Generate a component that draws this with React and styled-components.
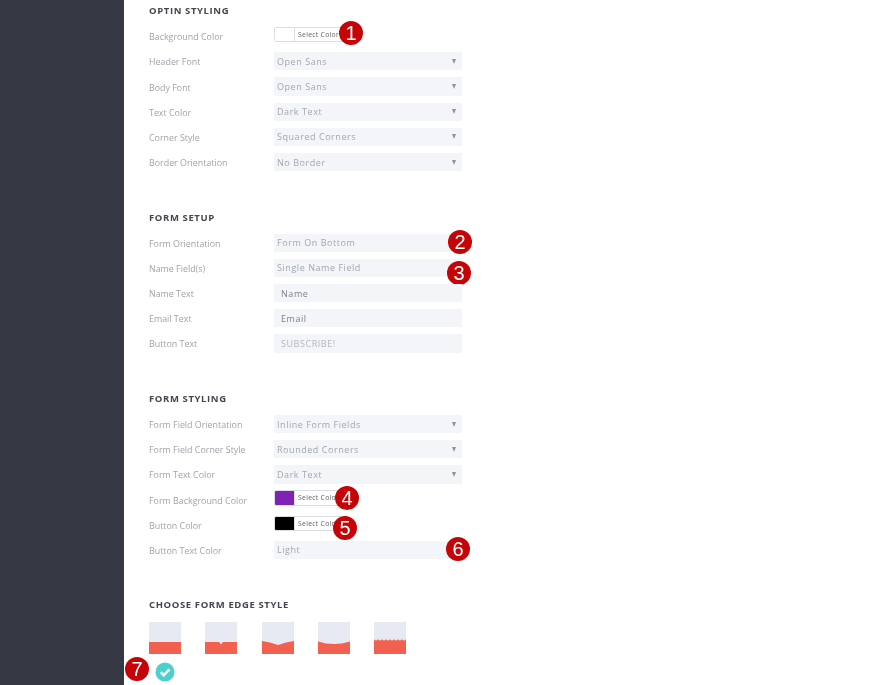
import React from "react";
import styled, { createGlobalStyle } from "styled-components";

const Global = createGlobalStyle`
  html, body { margin: 0; padding: 0; background: #fff; overflow: hidden; }
  body { font-family: "Open Sans", "Liberation Sans", sans-serif; }
`;
const Page = styled.div`
  display: flex;
  width: 880px;
  height: 685px;
  overflow: hidden;
`;
const Sidebar = styled.aside`
  flex: 0 0 124px;
  background: #363943;
`;
const Main = styled.main`
  position: relative;
  flex: 1;
  padding: 4px 0 0 25px;
  filter: blur(0.3px);
`;
const Section = styled.section`
  margin-bottom: 39.3px;
`;
const Heading = styled.h2`
  margin: 0 0 9px;
  height: 14px;
  font-size: 9.5px;
  line-height: 14px;
  font-weight: 700;
  letter-spacing: 0.62px;
  color: #43464f;
  text-transform: uppercase;
`;
const Rows = styled.div`
  display: grid;
  grid-auto-rows: 18.3px;
  row-gap: 6.9px;
`;
const Row = styled.div`
  position: relative;
  display: grid;
  grid-template-columns: 125px 188px;
  align-items: center;
  width: 313px;
`;
const Label = styled.label`
  padding-top: 1px;
  font-size: 8.9px;
  color: #a0a3aa;
  white-space: nowrap;
`;
const Field = styled.div`
  display: flex;
  align-items: center;
  justify-content: space-between;
  height: 18.3px;
  padding: 0 ${(p) => (p.$input ? "7px" : "3px")};
  padding-right: 6px;
  background: #f3f5f9;
  font-size: 9px;
  letter-spacing: 0.55px;
  color: ${(p) => p.$color || "#a3a6ae"};
  white-space: nowrap;
`;
const Arrow = styled.span`
  width: 0;
  height: 0;
  border-left: 2.5px solid transparent;
  border-right: 2.5px solid transparent;
  border-top: 5.5px solid #8f939d;
`;
const Picker = styled.div`
  display: flex;
  width: 72px;
  height: 15.5px;
  margin-top: -3px;
  box-sizing: border-box;
  border: 1px solid #dcdde0;
  border-radius: 2px;
  overflow: hidden;
  background: #fff;
`;
const Swatch = styled.span`
  flex: 0 0 19px;
  background: ${(p) => p.$color};
`;
const SelectText = styled.span`
  flex: 1;
  border-left: 1px solid #dcdde0;
  padding-left: 3px;
  font-size: 6.8px;
  line-height: 13px;
  letter-spacing: 0.3px;
  color: #5f626a;
  white-space: nowrap;
`;
const Badge = styled.span`
  position: absolute;
  left: ${(p) => p.$x}px;
  top: ${(p) => p.$y}px;
  width: 24px;
  height: 24px;
  border-radius: 50%;
  background: #c40407;
  color: #fff;
  font-family: "Liberation Sans", Arial, sans-serif;
  font-size: 20px;
  line-height: 24px;
  text-align: center;
`;
const Thumbs = styled.div`
  display: flex;
  gap: 24.3px;
  padding-top: 1px;
`;
const Thumb = styled.svg`
  display: block;
  width: 32px;
  height: 32px;
`;
const Check = styled.svg`
  position: absolute;
  left: 31px;
  top: 662px;
  width: 20px;
  height: 20px;
`;

const EDGES = [
  "M0 20H32V32H0Z",
  "M0 20H14L16 22.5L18 20H32V32H0Z",
  "M0 19Q8 20 16 23Q24 20 32 19V32H0Z",
  "M0 19.5Q16 24.5 32 19.5V32H0Z",
  "M0 16.5a2 2 0 0 0 4 0a2 2 0 0 0 4 0a2 2 0 0 0 4 0a2 2 0 0 0 4 0a2 2 0 0 0 4 0a2 2 0 0 0 4 0a2 2 0 0 0 4 0a2 2 0 0 0 4 0V32H0Z",
];

const Select = ({ label, value, children }) => (
  <Row>
    <Label>{label}</Label>
    <Field>{value}<Arrow /></Field>
    {children}
  </Row>
);
const Text = ({ label, value, input, color, children }) => (
  <Row>
    <Label>{label}</Label>
    <Field $input={input} $color={color}>{value}</Field>
    {children}
  </Row>
);
const Color = ({ label, color, children }) => (
  <Row>
    <Label>{label}</Label>
    <Picker>
      <Swatch $color={color} />
      <SelectText>Select Color</SelectText>
    </Picker>
    {children}
  </Row>
);

export default function App() {
  return (
    <Page>
      <Global />
      <Sidebar />
      <Main>
        <Section>
          <Heading>Optin Styling</Heading>
          <Rows>
            <Color label="Background Color" color="#ffffff"><Badge $x={190} $y={-6}>1</Badge></Color>
            <Select label="Header Font" value="Open Sans" />
            <Select label="Body Font" value="Open Sans" />
            <Select label="Text Color" value="Dark Text" />
            <Select label="Corner Style" value="Squared Corners" />
            <Select label="Border Orientation" value="No Border" />
          </Rows>
        </Section>
        <Section>
          <Heading>Form Setup</Heading>
          <Rows>
            <Text label="Form Orientation" value="Form On Bottom"><Badge $x={299} $y={-4}>2</Badge></Text>
            <Text label="Name Field(s)" value="Single Name Field"><Badge $x={298} $y={2}>3</Badge></Text>
            <Text label="Name Text" value="Name" input color="#7d808a" />
            <Text label="Email Text" value="Email" input color="#7d808a" />
            <Text label="Button Text" value="SUBSCRIBE!" input color="#b3b6bd" />
          </Rows>
        </Section>
        <Section>
          <Heading>Form Styling</Heading>
          <Rows>
            <Select label="Form Field Orientation" value="Inline Form Fields" />
            <Select label="Form Field Corner Style" value="Rounded Corners" />
            <Select label="Form Text Color" value="Dark Text" />
            <Color label="Form Background Color" color="#8222b4"><Badge $x={186} $y={-4}>4</Badge></Color>
            <Color label="Button Color" color="#000000"><Badge $x={184} $y={0}>5</Badge></Color>
            <Text label="Button Text Color" value="Light"><Badge $x={297} $y={-4}>6</Badge></Text>
          </Rows>
        </Section>
        <Section>
          <Heading>Choose Form Edge Style</Heading>
          <Thumbs>
            {EDGES.map((d) => (
              <Thumb key={d} viewBox="0 0 32 32">
                <rect width="32" height="32" fill="#e7eaf3" />
                <path d={d} fill="#f2604f" />
              </Thumb>
            ))}
          </Thumbs>
        </Section>
        <Badge $x={1} $y={657}>7</Badge>
        <Check viewBox="0 0 20 20">
          <circle cx="10" cy="10" r="9.5" fill="#4ccfcd" />
          <path d="M5.8 10.3L8.8 13.2L14.4 7.4" fill="none" stroke="#fff" strokeWidth="2.6" />
        </Check>
      </Main>
    </Page>
  );
}
